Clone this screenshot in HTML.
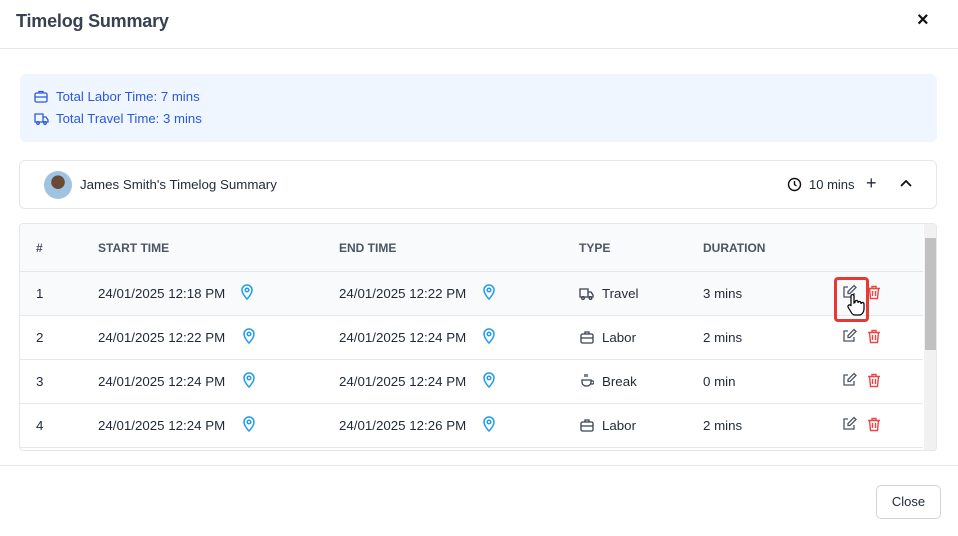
<html><head><style>
*{box-sizing:border-box;margin:0;padding:0}
body{width:958px;height:536px;background:#fff;font-family:"Liberation Sans",sans-serif;position:relative;overflow:hidden;color:#1f2937}
.a{position:absolute}
.hdr{left:0;top:0;width:958px;height:49px;border-bottom:1px solid #e5e7eb}
.sum{left:20px;top:74px;width:917px;height:68px;background:#eff6ff;border-radius:6px;color:#2b59d9;font-size:13.2px}
.card{left:19px;top:160px;width:918px;height:49px;border:1px solid #e5e7eb;border-radius:6px}
.tbl{left:19px;top:223px;width:918px;height:228px;border:1px solid #e5e7eb;border-radius:4px;overflow:hidden}
.row{position:absolute;left:0;width:903px;height:44px;border-bottom:1px solid #e5e7eb;font-size:13.3px;color:#1f2937}
.row span{position:absolute;top:0;line-height:44px}
.th span{font-size:12px;font-weight:bold;color:#4b5563}
svg{position:absolute}
</style></head><body>
<div class="a hdr"><div class="a" style="left:16px;top:11px;font-size:18px;color:#374151;font-weight:bold;letter-spacing:-.2px">Timelog Summary</div>
<div class="a" style="left:917px;top:9px;font-size:20px;font-weight:bold;color:#111">×</div></div>
<div class="a sum">
<svg style="left:14px;top:16px" width="14" height="13" viewBox="0 0 14 13" fill="none" stroke="#2b59d9" stroke-width="1.3"><rect x="1" y="3" width="12" height="9" rx="1.5"/><path d="M5 3V1.5h4V3M1 7h12"/></svg>
<div class="a" style="left:36px;top:15px">Total Labor Time: 7 mins</div>
<svg style="left:14px;top:39px" width="15" height="12" viewBox="0 0 15 12" fill="none" stroke="#2b59d9" stroke-width="1.3"><path d="M1 1h8v8H1zM9 4h3l2 3v2H9"/><circle cx="4" cy="10" r="1.3"/><circle cx="11" cy="10" r="1.3"/></svg>
<div class="a" style="left:36px;top:37px">Total Travel Time: 3 mins</div>
</div>
<div class="a card">
<div class="a" style="left:24px;top:10px;width:28px;height:28px;border-radius:50%;background:radial-gradient(circle at 50% 40%,#6b4a35 30%,#9fc3e0 32%);"></div>
<div class="a" style="left:60px;top:16px;font-size:13.3px;color:#1f2937">James Smith's Timelog Summary</div>
<svg style="left:767px;top:16px" width="15" height="15" viewBox="0 0 15 15" fill="none" stroke="#111" stroke-width="1.4"><circle cx="7.5" cy="7.5" r="6"/><path d="M7.5 4v3.5l2 1.5"/></svg>
<div class="a" style="left:789px;top:16px;font-size:13px">10 mins</div>
<div class="a" style="left:846px;top:12px;font-size:18px">+</div>
<svg style="left:880px;top:18px" width="12" height="8" viewBox="0 0 12 8" fill="none" stroke="#111" stroke-width="1.8"><path d="M1 7l5-5 5 5"/></svg>
</div>
<div class="a tbl">
<div class="row th" style="top:0;height:48px;background:#f9fafb"><span style="left:16px;line-height:48px">#</span><span style="left:78px;line-height:48px">START TIME</span><span style="left:319px;line-height:48px">END TIME</span><span style="left:559px;line-height:48px">TYPE</span><span style="left:683px;line-height:48px">DURATION</span></div>
<div class="row" style="top:48px;background:#f9fafb"><span style="left:16px">1</span><span style="left:78px">24/01/2025 12:18 PM</span><span style="left:319px">24/01/2025 12:22 PM</span><span style="left:582px">Travel</span><span style="left:683px">3 mins</span></div>
<div class="row" style="top:92px"><span style="left:16px">2</span><span style="left:78px">24/01/2025 12:22 PM</span><span style="left:319px">24/01/2025 12:24 PM</span><span style="left:582px">Labor</span><span style="left:683px">2 mins</span></div>
<div class="row" style="top:136px"><span style="left:16px">3</span><span style="left:78px">24/01/2025 12:24 PM</span><span style="left:319px">24/01/2025 12:24 PM</span><span style="left:582px">Break</span><span style="left:683px">0 min</span></div>
<div class="row" style="top:180px"><span style="left:16px">4</span><span style="left:78px">24/01/2025 12:24 PM</span><span style="left:319px">24/01/2025 12:26 PM</span><span style="left:582px">Labor</span><span style="left:683px">2 mins</span></div>
<div class="a" style="left:904px;top:0;width:14px;height:228px;background:#f1f1f1"></div>
<div class="a" style="left:905px;top:14px;width:12px;height:112px;background:#c1c1c1"></div>
</div>
<svg width="0" height="0"><defs>
<g id="pin"><path d="M7 15s5-5 5-9A5 5 0 0 0 2 6c0 4 5 9 5 9z" fill="none" stroke="#1d9bf0" stroke-width="1.5"/><circle cx="7" cy="6" r="1.8" fill="none" stroke="#1d9bf0" stroke-width="1.5"/></g>
<g id="ed" fill="none" stroke="#4b5563" stroke-width="1.3"><path d="M6 3H2v10h10V9"/><path d="M12 1.5l2 2L8 9.5H6v-2z"/></g>
<g id="tr" fill="none" stroke="#ef4444" stroke-width="1.4"><path d="M1 3.5h12M5 3.5V1.5h4v2M2.5 3.5l1 10h7l1-10M5.5 6v5M8.5 6v5"/></g>
<g id="br" fill="none" stroke="#374151" stroke-width="1.3"><rect x="1" y="4" width="12" height="9" rx="1.5"/><path d="M5 4V2h4v2M1 8h12"/></g>
</defs></svg>
<svg style="left:240px;top:284px" width="14" height="16"><use href="#pin"/></svg><svg style="left:482px;top:284px" width="14" height="16"><use href="#pin"/></svg>
<svg style="left:242px;top:328px" width="14" height="16"><use href="#pin"/></svg><svg style="left:482px;top:328px" width="14" height="16"><use href="#pin"/></svg>
<svg style="left:242px;top:372px" width="14" height="16"><use href="#pin"/></svg><svg style="left:482px;top:372px" width="14" height="16"><use href="#pin"/></svg>
<svg style="left:242px;top:416px" width="14" height="16"><use href="#pin"/></svg><svg style="left:482px;top:416px" width="14" height="16"><use href="#pin"/></svg>
<svg style="left:579px;top:287px" width="16" height="14" viewBox="0 0 16 14" fill="none" stroke="#374151" stroke-width="1.3"><path d="M1 2h8v8H1zM9 5h3l2 3v2H9"/><circle cx="4" cy="11" r="1.3"/><circle cx="11.5" cy="11" r="1.3"/></svg>
<svg style="left:580px;top:330px" width="14" height="14"><use href="#br"/></svg>
<svg style="left:580px;top:373px" width="14" height="15" viewBox="0 0 14 15" fill="none" stroke="#374151" stroke-width="1.3"><path d="M2 7h9v2a4 4 0 0 1-4 4h-1a4 4 0 0 1-4-4zM11 8h1.5a1.5 1.5 0 0 1 0 3H11M5 1v3M7 1v3"/></svg>
<svg style="left:580px;top:418px" width="14" height="14"><use href="#br"/></svg>
<svg style="left:842px;top:284px" width="15" height="15"><use href="#ed"/></svg>
<svg style="left:842px;top:328px" width="15" height="15"><use href="#ed"/></svg>
<svg style="left:842px;top:372px" width="15" height="15"><use href="#ed"/></svg>
<svg style="left:842px;top:416px" width="15" height="15"><use href="#ed"/></svg>
<svg style="left:867px;top:285px" width="14" height="15"><use href="#tr"/></svg>
<svg style="left:867px;top:329px" width="14" height="15"><use href="#tr"/></svg>
<svg style="left:867px;top:373px" width="14" height="15"><use href="#tr"/></svg>
<svg style="left:867px;top:417px" width="14" height="15"><use href="#tr"/></svg>
<div class="a" style="left:834px;top:277px;width:35px;height:45px;border:3px solid #e53935;border-radius:4px"></div>
<svg style="left:847px;top:294px" width="18" height="22" viewBox="0 0 18 22"><path d="M4 2a1.5 1.5 0 0 1 3 0v7l1-.5V8a1.5 1.5 0 0 1 3 0v1a1.5 1.5 0 0 1 3 0v1a1.5 1.5 0 0 1 3 0v5c0 3-2 6-5 6H8c-2 0-3-1-4-3l-3-5a1.5 1.5 0 0 1 3-1z" fill="#fff" stroke="#000" stroke-width="1.2"/></svg>
<div class="a" style="left:0;top:465px;width:958px;height:1px;background:#e5e7eb"></div>
<div class="a" style="left:876px;top:485px;width:65px;height:34px;border:1px solid #d1d5db;border-radius:5px;font-size:13px;line-height:32px;text-align:center;color:#1f2937">Close</div>
</body></html>
